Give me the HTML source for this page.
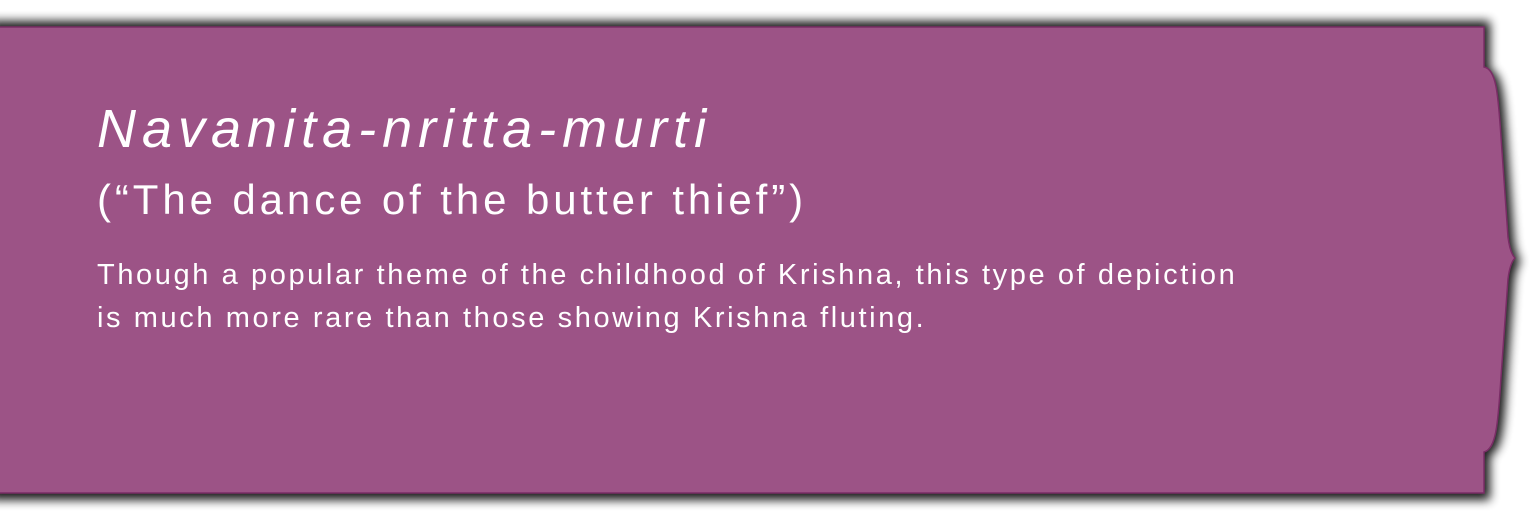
<!DOCTYPE html>
<html><head><style>
html,body{margin:0;padding:0;width:1536px;height:520px;background:#fff;overflow:hidden}
svg{position:absolute;left:0;top:0}
.t{position:absolute;left:97px;color:#fff;font-family:"Liberation Sans",sans-serif;white-space:nowrap}
</style></head><body>
<svg width="1536" height="520">
<defs><filter id="s" x="-10%" y="-20%" width="130%" height="150%"><feGaussianBlur stdDeviation="5"/></filter></defs>
<path d="M-10 21 H1490 V70 C1502 72 1504 95 1507 140 L1514 240 Q1516 256 1521 261 Q1516 266 1514 282 L1507 380 C1504 428 1502 452 1490 455 V500 H-10 Z" fill="#000" opacity="0.9" filter="url(#s)"/>
<path d="M-10 27 H1484 V67 C1496 69 1498 92 1501 137 L1508 237 Q1510 253 1515 258 Q1510 263 1508 279 L1501 377 C1498 425 1496 449 1484 452 V493 H-10 Z" fill="#9c5386" stroke="#7a2d66" stroke-width="1.5"/>
</svg>
<div class="t" style="top:98px;font-size:54px;font-style:italic;letter-spacing:6px">Navanita-nritta-murti</div>
<div class="t" style="top:176px;font-size:42px;letter-spacing:3.9px">(“The dance of the butter thief”)</div>
<div class="t" style="top:254px;font-size:29px;line-height:43px;letter-spacing:2.6px">Though a popular theme of the childhood of Krishna, this type of depiction<br>is much more rare than those showing Krishna fluting.</div>
</body></html>
